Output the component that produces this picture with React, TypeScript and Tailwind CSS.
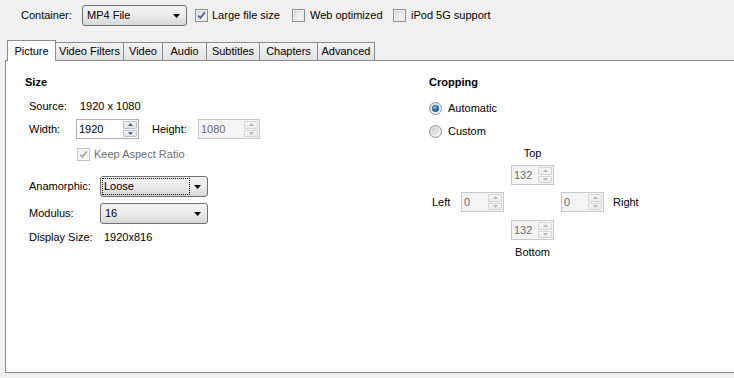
import React from "react";

function Checkbox({ checked, disabled }: { checked?: boolean; disabled?: boolean }) {
  return (
    <svg width="13" height="13" viewBox="0 0 13 13" className="shrink-0">
      <defs>
        <linearGradient id="cbg" x1="0" y1="0" x2="1" y2="1">
          <stop offset="0" stopColor="#dcdcdc" />
          <stop offset="1" stopColor="#ffffff" />
        </linearGradient>
      </defs>
      <rect x="0.5" y="0.5" width="12" height="12" fill="#ffffff" stroke={disabled ? "#c5c5c5" : "#8e8f8f"} />
      <rect x="2" y="2" width="9" height="9" fill={disabled ? "#f4f4f4" : "url(#cbg)"} stroke={disabled ? "#e6e6e6" : "#c6c6c6"} strokeWidth="0.6" />
      {checked && (
        <path d="M3.2 6.6 L5.4 8.9 L9.8 3.4" fill="none" stroke={disabled ? "#a6a6a6" : "#4a5f97"} strokeWidth="1.7" />
      )}
    </svg>
  );
}

function Radio({ checked }: { checked?: boolean }) {
  return (
    <svg width="13" height="13" viewBox="0 0 13 13" className="shrink-0">
      <defs>
        <linearGradient id="rbg" x1="0" y1="0" x2="1" y2="1">
          <stop offset="0" stopColor="#d6d6d6" />
          <stop offset="1" stopColor="#ffffff" />
        </linearGradient>
        <radialGradient id="rdot" cx="0.4" cy="0.35" r="0.7">
          <stop offset="0" stopColor="#8ed0f5" />
          <stop offset="0.5" stopColor="#2a7fc0" />
          <stop offset="1" stopColor="#0d3e73" />
        </radialGradient>
        <linearGradient id="rin" x1="0" y1="0" x2="1" y2="1">
          <stop offset="0" stopColor="#cfcfcf" />
          <stop offset="1" stopColor="#f4f4f4" />
        </linearGradient>
      </defs>
      <circle cx="6.5" cy="6.5" r="6" fill="url(#rbg)" stroke="#8e8f8f" />
      {checked ? (
        <circle cx="6.5" cy="6.5" r="3.3" fill="url(#rdot)" stroke="#1b4e84" strokeWidth="0.5" />
      ) : (
        <circle cx="6.5" cy="6.5" r="4" fill="url(#rin)" />
      )}
    </svg>
  );
}

function Arrow() {
  return (
    <svg width="7" height="4" viewBox="0 0 7 4" className="shrink-0">
      <polygon points="0,0 7,0 3.5,4" fill="#000" />
    </svg>
  );
}

function Select({ value, className, focused }: { value: string; className: string; focused?: boolean }) {
  return (
    <div
      className={`${className} h-[21px] flex items-center rounded-[3px] border border-[#707070] bg-linear-to-b from-[#f2f2f2] via-[#ebebeb] to-[#d8d8d8] pl-[2px] pr-[6px]`}
    >
      <div className="flex-1 flex items-center h-full py-[2px] pr-[5px]">
        <span
          className={`h-full flex items-center flex-1 pl-[1px] ${focused ? "outline-1 outline-dotted outline-[#000]" : "pl-[2px]"}`}
        >
          {value}
        </span>
      </div>
      <Arrow />
    </div>
  );
}

function SpinArrow({ up, disabled }: { up?: boolean; disabled?: boolean }) {
  return (
    <svg width="5" height="3" viewBox="0 0 5 3">
      <polygon points={up ? "0,3 5,3 2.5,0" : "0,0 5,0 2.5,3"} fill={disabled ? "#b9b9b9" : "#4d6185"} />
    </svg>
  );
}

function Spin({ value, className, disabled }: { value: string; className: string; disabled?: boolean }) {
  const btn = disabled
    ? "border-[#d5d5d5] bg-linear-to-b from-[#f6f6f6] to-[#ececec]"
    : "border-[#b8c1cc] bg-linear-to-b from-[#f5f6f8] to-[#dfe3e8]";
  return (
    <div
      className={`${className} h-[20px] flex border ${
        disabled ? "border-[#c9c9c9] bg-[#f4f4f4] text-[#6d6d6d]" : "border-[#abadb3] bg-white text-black"
      }`}
    >
      <div className="flex-1 flex items-center pl-[2px]">{value}</div>
      <div className="w-[14px] flex flex-col py-[1px] mr-[1px] gap-[1px]">
        <div className={`flex-1 flex items-center justify-center border rounded-[1px] ${btn}`}>
          <SpinArrow up disabled={disabled} />
        </div>
        <div className={`flex-1 flex items-center justify-center border rounded-[1px] ${btn}`}>
          <SpinArrow disabled={disabled} />
        </div>
      </div>
    </div>
  );
}

function Tab({ label, w, selected, first }: { label: string; w: string; selected?: boolean; first?: boolean }) {
  return (
    <div
      className={`${w} ${first ? "" : "-ml-px"} flex items-center justify-center border-t border-l border-r border-[#898c95] ${
        selected ? "h-[21px] bg-white z-10 relative" : "h-[18px] mb-[1px] bg-linear-to-b from-[#f4f4f4] to-[#e2e2e2]"
      }`}
    >
      {label}
    </div>
  );
}

export default function App() {
  return (
    <div className="w-[734px] h-[378px] overflow-hidden bg-[#f0f0f0] text-[11px] text-black font-['Liberation_Sans',Arial,sans-serif] leading-none">
      {/* top bar */}
      <div className="mt-[5px] h-[21px] flex items-center">
        <span className="ml-[21px] w-[61px]">Container:</span>
        <Select value="MP4 File" className="w-[105px]" />
        <div className="ml-[8px] w-[97px] flex items-center">
          <Checkbox checked />
          <span className="ml-[4px]">Large file size</span>
        </div>
        <div className="w-[101px] flex items-center">
          <Checkbox />
          <span className="ml-[5px]">Web optimized</span>
        </div>
        <div className="flex items-center">
          <Checkbox />
          <span className="ml-[5px]">iPod 5G support</span>
        </div>
      </div>

      {/* tabs */}
      <div className="mt-[14px] h-[21px] flex items-end pl-[7px]">
        <Tab label="Picture" w="w-[49px]" selected first />
        <Tab label="Video Filters" w="w-[69px]" />
        <Tab label="Video" w="w-[40px]" />
        <Tab label="Audio" w="w-[45px]" />
        <Tab label="Subtitles" w="w-[54px]" />
        <Tab label="Chapters" w="w-[59px]" />
        <Tab label="Advanced" w="w-[58px]" />
      </div>

      {/* pane */}
      <div className="-mt-px ml-[5px] w-[740px] h-[313px] border border-[#898c95] bg-white flex">
        {/* left column */}
        <div className="w-[423px] pt-[13px]">
          <div className="h-[16px] flex items-center pl-[19px] font-bold">Size</div>
          <div className="mt-[8px] h-[16px] flex items-center pl-[23px]">
            <span className="w-[51px]">Source:</span>
            <span>1920 x 1080</span>
          </div>
          <div className="mt-[5px] h-[20px] flex items-center pl-[23px]">
            <span className="w-[47px]">Width:</span>
            <Spin value="1920" className="w-[63px]" />
            <span className="ml-[13px] w-[46px]">Height:</span>
            <Spin value="1080" className="w-[62px]" disabled />
          </div>
          <div className="mt-[7px] h-[16px] flex items-center pl-[71px]">
            <Checkbox checked disabled />
            <span className="ml-[4px] text-[#6d6d6d]">Keep Aspect Ratio</span>
          </div>
          <div className="mt-[14px] h-[21px] flex items-center pl-[23px]">
            <span className="w-[71px]">Anamorphic:</span>
            <Select value="Loose" className="w-[108px]" focused />
          </div>
          <div className="mt-[6px] h-[21px] flex items-center pl-[23px]">
            <span className="w-[71px]">Modulus:</span>
            <Select value="16" className="w-[108px]" />
          </div>
          <div className="mt-[5px] h-[16px] flex items-center pl-[23px]">
            <span className="w-[75px]">Display Size:</span>
            <span>1920x816</span>
          </div>
        </div>

        {/* right column */}
        <div className="pt-[13px]">
          <div className="h-[16px] flex items-center font-bold">Cropping</div>
          <div className="mt-[10px] h-[16px] flex items-center">
            <Radio checked />
            <span className="ml-[6px]">Automatic</span>
          </div>
          <div className="mt-[7px] h-[16px] flex items-center">
            <Radio />
            <span className="ml-[6px]">Custom</span>
          </div>

          <div className="ml-[3px]">
            <div className="mt-[6px] h-[16px] grid grid-cols-[22px_43px_43px_43px_auto] gap-x-[7px] items-center">
              <div className="col-start-3 text-center">Top</div>
            </div>
            <div className="mt-[4px] grid grid-cols-[22px_43px_43px_43px_auto] gap-x-[7px] items-center">
              <div className="col-start-3">
                <Spin value="132" className="w-[43px]" disabled />
              </div>
            </div>
            <div className="mt-[7px] grid grid-cols-[22px_43px_43px_43px_auto] gap-x-[7px] items-center">
              <div>Left</div>
              <Spin value="0" className="w-[43px]" disabled />
              <div />
              <Spin value="0" className="w-[43px]" disabled />
              <div className="pl-[2px]">Right</div>
            </div>
            <div className="mt-[8px] grid grid-cols-[22px_43px_43px_43px_auto] gap-x-[7px] items-center">
              <div className="col-start-3">
                <Spin value="132" className="w-[43px]" disabled />
              </div>
            </div>
            <div className="mt-[4px] h-[16px] grid grid-cols-[22px_43px_43px_43px_auto] gap-x-[7px] items-center">
              <div className="col-start-3 text-center">Bottom</div>
            </div>
          </div>
        </div>
      </div>
    </div>
  );
}
